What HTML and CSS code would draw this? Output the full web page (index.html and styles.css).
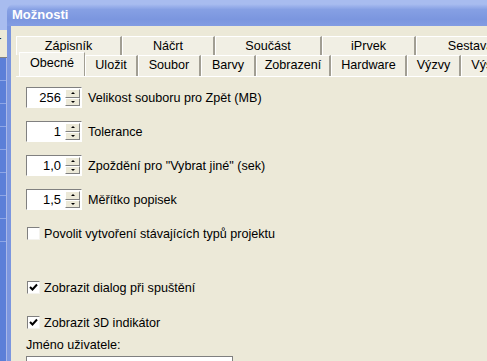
FILE: index.html
```html
<!DOCTYPE html>
<html>
  <head>
    <meta charset="utf-8" />
    <title>Možnosti</title>
    <link rel="stylesheet" href="styles.css">
  </head>
  <body>
    <div id="desk">
      <div id="behind">
        <div class="behind-top"></div>
        <div class="behind-win">r</div>
        <div class="behind-list">
          <div></div><div></div><div></div><div></div><div></div><div></div><div></div><div></div>
        </div>
      </div>
      <div id="dialog">
        <div id="title">Možnosti</div>
        <div id="frame">
          <div id="tabs">
            <div class="tabrow back">
              <div class="tab" style="width:106px">Zápisník</div>
              <div class="tab" style="width:93px">Náčrt</div>
              <div class="tab" style="width:107px">Součást</div>
              <div class="tab" style="width:94px">iPrvek</div>
              <div class="tab" style="width:110px">Sestava</div>
            </div>
            <div class="tabrow front">
              <div class="tab selected" style="width:66px">Obecné</div>
              <div class="tab" style="width:53px">Uložit</div>
              <div class="tab" style="width:63px">Soubor</div>
              <div class="tab" style="width:55px">Barvy</div>
              <div class="tab" style="width:75px">Zobrazení</div>
              <div class="tab" style="width:76px">Hardware</div>
              <div class="tab" style="width:54px">Výzvy</div>
              <div class="tab" style="width:60px">Výstup</div>
            </div>
          </div>
          <div id="panel">
            <div class="row">
              <div class="spin"><span class="value">256</span><span class="arrows"><i class="up"></i><i class="down"></i></span></div>
              <span>Velikost souboru pro Zpět (MB)</span>
            </div>
            <div class="row">
              <div class="spin"><span class="value">1</span><span class="arrows"><i class="up"></i><i class="down"></i></span></div>
              <span>Tolerance</span>
            </div>
            <div class="row">
              <div class="spin"><span class="value">1,0</span><span class="arrows"><i class="up"></i><i class="down"></i></span></div>
              <span>Zpoždění pro "Vybrat jiné" (sek)</span>
            </div>
            <div class="row">
              <div class="spin"><span class="value">1,5</span><span class="arrows"><i class="up"></i><i class="down"></i></span></div>
              <span>Měřítko popisek</span>
            </div>
            <div class="row check">
              <span class="box"></span>
              <span>Povolit vytvoření stávajících typů projektu</span>
            </div>
            <div class="row check gap">
              <span class="box on">
                <svg width="9" height="9" viewBox="0 0 9 9"><path d="M1 4 L3.5 6.5 L8 1.5" stroke="#000" stroke-width="2" fill="none"/></svg>
              </span>
              <span>Zobrazit dialog při spuštění</span>
            </div>
            <div class="row check">
              <span class="box on">
                <svg width="9" height="9" viewBox="0 0 9 9"><path d="M1 4 L3.5 6.5 L8 1.5" stroke="#000" stroke-width="2" fill="none"/></svg>
              </span>
              <span>Zobrazit 3D indikátor</span>
            </div>
            <div class="label">Jméno uživatele:</div>
            <div class="field"></div>
          </div>
        </div>
      </div>
    </div>
  </body>
</html>
```

FILE: styles.css
```css
body {
  margin: 0;
  background-color: #a8bcef;
  font-family: "Liberation Sans", Arial, sans-serif;
  font-size: 12.6px;
  color: #000000;
  overflow: hidden;
}
#desk {
  display: flex;
  width: 487px;
  height: 361px;
  overflow: hidden;
}
#behind {
  width: 7px;
  display: flex;
  flex-direction: column;
  flex-shrink: 0;
}
.behind-top {
  height: 30px;
  background-color: #a8bcef;
}
.behind-win {
  height: 27px;
  background-color: #ece9d8;
  border-bottom: 1px solid #808080;
  line-height: 22px;
  text-indent: -3px;
  overflow: hidden;
}
.behind-list {
  flex: 1;
  background-color: #5b7fd8;
  border-right: 1px solid #aab8e8;
}
.behind-list div {
  height: 22px;
  border-bottom: 1px solid #8ea6e6;
}
#dialog {
  flex: 1;
  margin-top: 4px;
  display: flex;
  flex-direction: column;
  min-width: 0;
}
#title {
  height: 23px;
  border-radius: 7px 0 0 0;
  background: linear-gradient(#a9bdf0, #86a0e4 25%, #7b96df 70%, #829ce2);
  color: #ffffff;
  font-weight: bold;
  font-size: 13px;
  line-height: 22px;
  padding-left: 5px;
}
#frame {
  flex: 1;
  background-color: #ece9d8;
  border-left: 4px solid #7b96df;
  padding-left: 5px;
}
#tabs {
  padding-top: 10px;
  display: flex;
  flex-direction: column;
}
.tabrow {
  display: flex;
  white-space: nowrap;
}
.tabrow.back {
  height: 19px;
}
.tabrow.front {
  height: 21px;
  padding-left: 3px;
}
.tab {
  flex-shrink: 0;
  box-sizing: border-box;
  text-align: center;
  background-color: #f1efe4;
  border-top: 1px solid #ffffff;
  border-left: 1px solid #ffffff;
  border-right: 2px solid #a19e93;
  line-height: 19px;
}
.tab.selected {
  margin-top: -3px;
  height: 24px;
  background-color: #f4f3ec;
  border-right: 1px solid #a19e93;
  line-height: 21px;
}
#panel {
  height: 300px;
  padding: 10px 0 0 10px;
  border-top: 1px solid #ffffff;
  display: flex;
  flex-direction: column;
}
.row {
  display: flex;
  align-items: center;
  height: 21px;
  margin-bottom: 13px;
  white-space: nowrap;
}
.spin {
  display: flex;
  width: 56px;
  height: 21px;
  margin-right: 6px;
  box-sizing: border-box;
  border-top: 1px solid #808080;
  border-left: 1px solid #808080;
  border-right: 1px solid #ffffff;
  border-bottom: 1px solid #ffffff;
  background-color: #ffffff;
}
.value {
  flex: 1;
  text-align: right;
  padding-right: 4px;
  line-height: 19px;
  font-size: 13px;
}
.arrows {
  width: 15px;
  display: flex;
  flex-direction: column;
  padding: 1px 1px 1px 0;
}
.arrows i {
  flex: 1;
  background-color: #ece9d8;
  border-top: 1px solid #ffffff;
  border-left: 1px solid #ffffff;
  border-right: 1px solid #808080;
  border-bottom: 1px solid #808080;
  display: flex;
  align-items: center;
  justify-content: center;
}
.arrows i::after {
  content: "";
  border-left: 2px solid transparent;
  border-right: 2px solid transparent;
}
.arrows .up::after {
  border-bottom: 2px solid #000000;
}
.arrows .down::after {
  border-top: 2px solid #000000;
}
.row.check {
  height: 21px;
  margin-bottom: 14px;
}
.row.gap {
  margin-top: 19px;
}
.box {
  width: 13px;
  height: 13px;
  box-sizing: border-box;
  margin: 0 4px 0 1px;
  background-color: #ffffff;
  border-top: 1px solid #808080;
  border-left: 1px solid #808080;
  border-right: 1px solid #f4f3ee;
  border-bottom: 1px solid #f4f3ee;
  display: flex;
  align-items: center;
  justify-content: center;
}
.label {
  margin-top: -9px;
  line-height: 15px;
}
.field {
  margin-top: 3px;
  width: 207px;
  height: 20px;
  flex-shrink: 0;
  box-sizing: border-box;
  border: 1px solid #7f7f7f;
  background-color: #ffffff;
}
```
